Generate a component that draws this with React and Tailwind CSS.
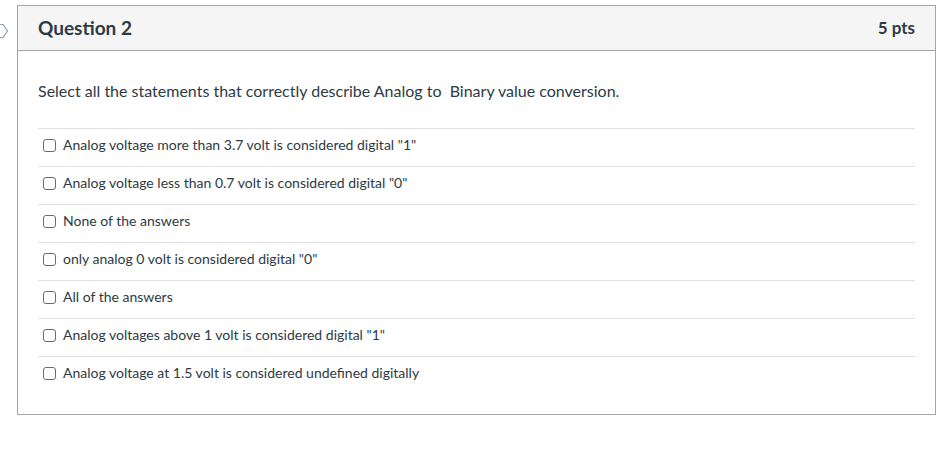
import React from "react";

const answers = [
  'Analog voltage more than 3.7 volt is considered digital "1"',
  'Analog voltage less than 0.7 volt is considered digital "0"',
  "None of the answers",
  'only analog 0 volt is considered digital "0"',
  "All of the answers",
  'Analog voltages above 1 volt is considered digital "1"',
  "Analog voltage at 1.5 volt is considered undefined digitally",
];

export default function App() {
  return (
    <div className="relative h-[449px] w-[949px] bg-white text-[#2d3b45]" style={{ fontFamily: "Lato, 'Liberation Sans', sans-serif" }}>
      <svg className="absolute left-[-6px] top-[18px]" width="16" height="16" viewBox="0 0 16 16">
        <path d="M1 1.5 H9 L13.5 8 L9 14.5 H1" fill="none" stroke="#8a9eb0" strokeWidth="1.2" />
      </svg>
      <div className="ml-[17px] mt-[5px] w-[919px] border border-[#a5a5a5]">
        <div className="flex h-[45px] items-center justify-between border-b border-[#a5a5a5] bg-[#f5f5f5] px-5">
          <span className="text-[19px] font-bold leading-[24px]">Question 2</span>
          <span className="text-[17px] font-bold leading-[24px]">5 pts</span>
        </div>
        <div className="px-5 pb-[20px] pt-[29px]">
          <div className="text-[16px] leading-[22px]">Select all the statements that correctly describe Analog to&nbsp; Binary value conversion.</div>
          <div className="mt-[26px]">
            {answers.map((a, i) => (
              <div key={i} className="flex h-[38px] items-center border-t border-[#e0e0e0] pb-[5px] pl-[5px]">
                <span className="mr-[7px] h-[13px] w-[13px] rounded-[3px] border border-[#6b6b6b] bg-white" />
                <span className="text-[14px] leading-[18px]">{a}</span>
              </div>
            ))}
          </div>
        </div>
      </div>
    </div>
  );
}
